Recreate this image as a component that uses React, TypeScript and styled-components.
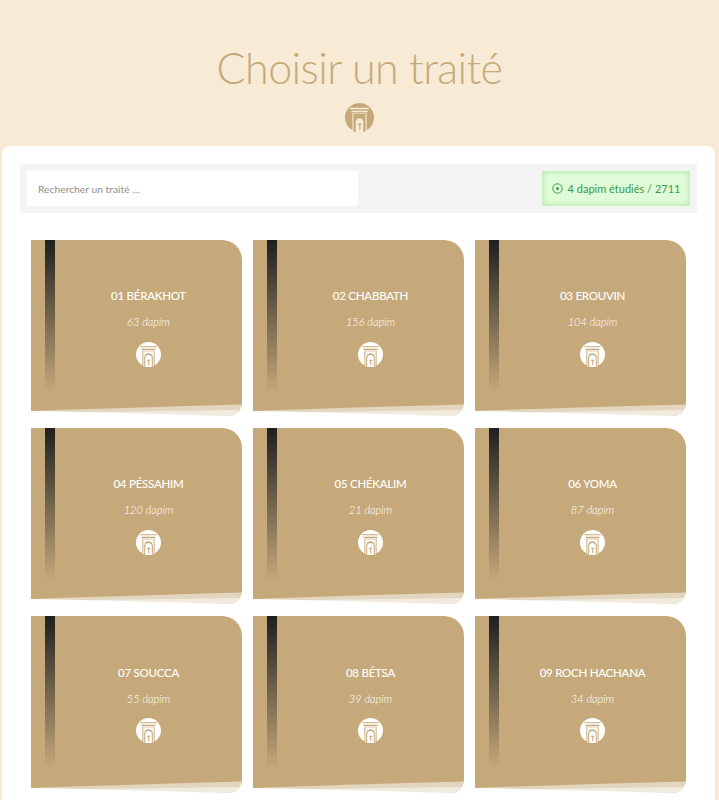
import React from "react";
import styled, { createGlobalStyle } from "styled-components";

const Global = createGlobalStyle`
  html, body { margin: 0; padding: 0; background: #f7ebd6; }
  body { font-family: "Lato", "Open Sans", sans-serif; }
  * { box-sizing: border-box; }
`;

const Page = styled.div`
  width: 719px;
  height: 800px;
  overflow: hidden;
  padding-top: 42px;
`;

const Header = styled.header`
  display: flex;
  flex-direction: column;
  align-items: center;
`;

const Title = styled.h1`
  margin: 0;
  font-size: 43px;
  line-height: 52px;
  font-weight: 300;
  letter-spacing: -0.6px;
  color: #c6a97a;
`;

const HeaderIcon = styled.div`
  width: 29px;
  height: 29px;
  margin-top: 9px;
  margin-bottom: 14px;
`;

const Panel = styled.main`
  margin: 0 4px 0 2px;
  background: #fff;
  border-radius: 8px 8px 0 0;
  padding: 18px 18px 8px 18px;
`;

const Toolbar = styled.div`
  display: flex;
  justify-content: space-between;
  background: #f4f4f4;
  padding: 7px 7px;
  height: 49px;
`;

const Search = styled.input`
  width: 331px;
  height: 35px;
  border: 0;
  border-radius: 2px;
  background: #fff;
  padding: 0 11px;
  font-family: "Lato", sans-serif;
  font-size: 10.3px;
  outline: none;
  &::placeholder { color: #8f8f8f; opacity: 1; }
`;

const Progress = styled.div`
  width: 148px;
  height: 35px;
  display: flex;
  align-items: center;
  justify-content: center;
  gap: 5px;
  border-radius: 2px;
  background: #dffbd8;
  box-shadow: inset 0 0 6px #a5e59b;
  color: #3b9a48;
  font-size: 11px;
`;

const Grid = styled.div`
  display: grid;
  grid-template-columns: repeat(3, 211px);
  grid-auto-rows: 176.2px;
  column-gap: 11px;
  row-gap: 12px;
  margin: 27px 0 0 11px;
`;

const Card = styled.article`
  position: relative;
  overflow: hidden;
  background: #c6a97a;
  border-radius: 0 20px 14px 0;
  display: flex;
  flex-direction: column;
  align-items: center;
  padding: 48.2px 0 0 24px;
  color: #fff;
`;

const Spine = styled.span`
  position: absolute;
  top: 0;
  left: 14px;
  width: 10px;
  height: 153px;
  background: linear-gradient(#1f1f1f, #c6a97a);
`;

const Curl = styled.svg`
  position: absolute;
  left: 0;
  bottom: 0;
  width: 100%;
  height: 12px;
`;

const Name = styled.h2`
  margin: 0;
  font-size: 11.5px;
  line-height: 16px;
  font-weight: 500;
  letter-spacing: -0.25px;
`;

const Count = styled.p`
  margin: 11px 0 0;
  font-size: 11px;
  line-height: 14px;
  font-style: italic;
  font-weight: 300;
  color: #fff;
`;

const CardIcon = styled.div`
  width: 25px;
  height: 25px;
  margin-top: 12.5px;
`;

const TAN = "#c6a97a";

const Gate = ({ light, inverted }: { light: string; inverted?: boolean }) => {
  const circle = inverted ? TAN : light;
  const line = inverted ? light : TAN;
  return (
    <svg viewBox="0 0 29 29" width="100%" height="100%" style={{ display: "block" }}>
      <circle cx="14.5" cy="14.5" r="14.5" fill={circle} />
      <path d="M5 5.5h19M6.5 8.5h16" stroke={line} strokeWidth="1.4" fill="none" />
      <path d="M7 10h15v19H7z" fill={line} opacity=".6" />
      <path d="M8.8 11h11.4v18H8.8z" fill={circle} />
      <path d="M9.5 29V18a5 5 0 0 1 10 0v11z" fill={inverted ? circle : TAN} />
      <path d="M10.7 29V19a3.8 3.8 0 0 1 7.6 0v10z" fill={light} />
      <path d="M12.8 20.5h3.8v1.2h-1.2v5h-1.2v-5h-1.4z" fill={TAN} />
    </svg>
  );
};

const tractates = [
  ["01 BÉRAKHOT", "63 dapim"],
  ["02 CHABBATH", "156 dapim"],
  ["03 EROUVIN", "104 dapim"],
  ["04 PÉSSAHIM", "120 dapim"],
  ["05 CHÉKALIM", "21 dapim"],
  ["06 YOMA", "87 dapim"],
  ["07 SOUCCA", "55 dapim"],
  ["08 BÉTSA", "39 dapim"],
  ["09 ROCH HACHANA", "34 dapim"],
];

export default function App() {
  return (
    <Page>
      <Global />
      <Header>
        <Title>Choisir un traité</Title>
        <HeaderIcon>
          <Gate light="#f7ebd6" inverted />
        </HeaderIcon>
      </Header>
      <Panel>
        <Toolbar>
          <Search placeholder="Rechercher un traité ..." />
          <Progress>
            <svg width="11" height="11" viewBox="0 0 11 11" fill="none" stroke="#3b9a48">
              <circle cx="5.5" cy="5.5" r="4.7" />
              <circle cx="5.5" cy="5.5" r="1.5" fill="#3b9a48" stroke="none" />
            </svg>
            4 dapim étudiés / 2711
          </Progress>
        </Toolbar>
        <Grid>
          {tractates.map(([name, count]) => (
            <Card key={name}>
              <Spine />
              <Name>{name}</Name>
              <Count>{count}</Count>
              <CardIcon>
                <Gate light="#fff" />
              </CardIcon>
              <Curl viewBox="0 0 211 12" preserveAspectRatio="none">
                <path d="M0 7 Q100 3.5 211 0.5 V12 H0 Z" fill="#e3d6bf" />
                <path d="M60 8 Q140 6.8 211 6 V12 H60 Z" fill="#f1ebdf" />
                <path d="M0 7 Q100 9 192 12 H0 Z" fill="#fff" />
              </Curl>
            </Card>
          ))}
        </Grid>
      </Panel>
    </Page>
  );
}
